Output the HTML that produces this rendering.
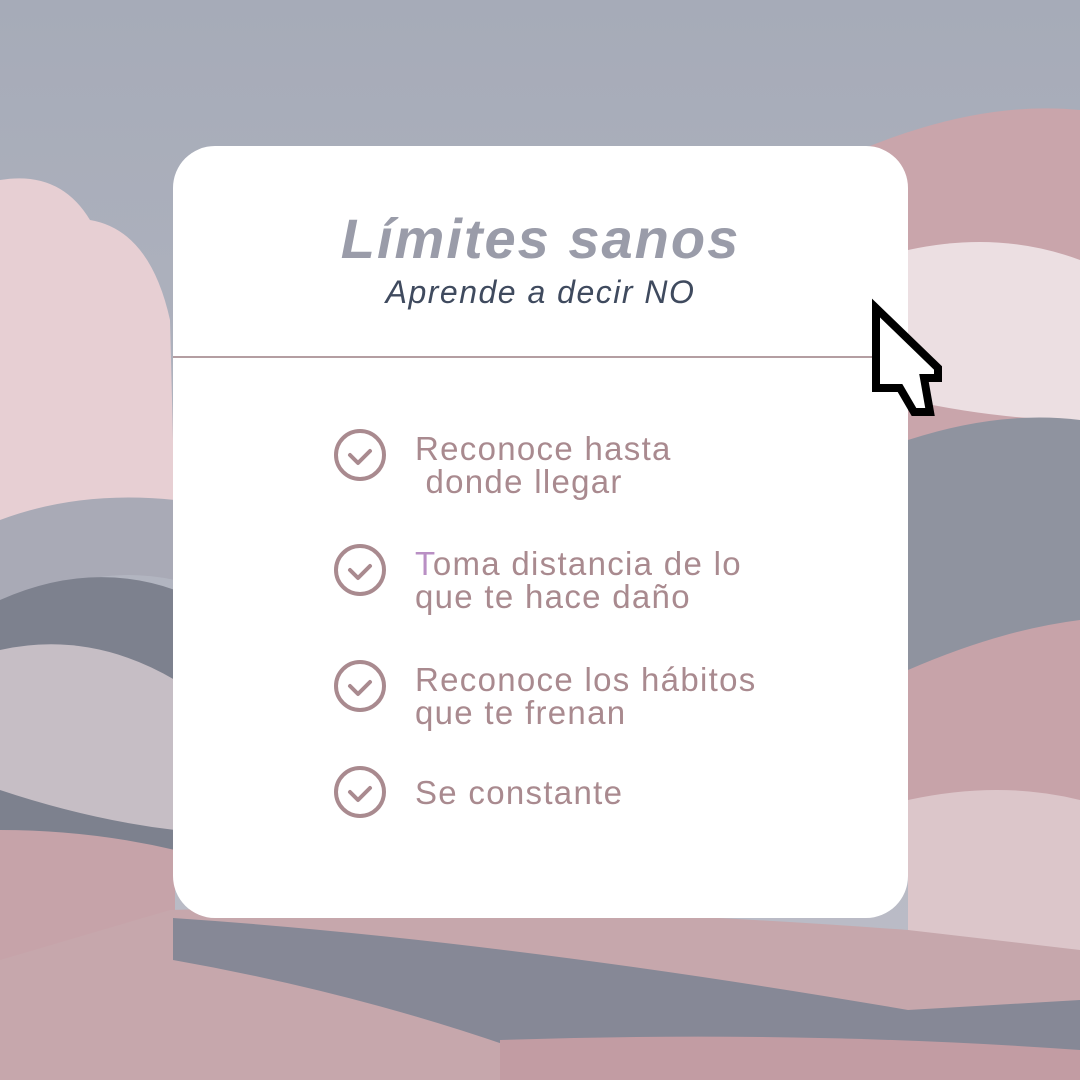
<!DOCTYPE html>
<html><head><meta charset="utf-8"><style>
body{margin:0;width:1080px;height:1080px;overflow:hidden;position:relative;font-family:"Liberation Sans",sans-serif}
.bg{position:absolute;inset:0}
.card{position:absolute;left:173px;top:146px;width:735px;height:772px;background:#fff;border-radius:42px}
.t1{position:absolute;left:173px;width:735px;top:206px;text-align:center;font-size:56px;font-weight:bold;font-style:italic;color:#9a9ca9;letter-spacing:2px}
.t2{position:absolute;left:173px;width:735px;top:274px;text-align:center;font-size:32px;font-style:italic;color:#3f4a5e;letter-spacing:1.5px}
.hr{position:absolute;left:173px;top:356px;width:700px;height:2px;background:#b49ea2}
.it{position:absolute;left:415px;font-size:33px;line-height:33px;color:#a98a8f;letter-spacing:1.3px;white-space:nowrap}
</style></head><body>
<svg class="bg" width="1080" height="1080" viewBox="0 0 1080 1080">
<defs><linearGradient id="sky" x1="0" y1="0" x2="0" y2="1"><stop offset="0" stop-color="#a6abb8"/><stop offset="1" stop-color="#bdbec8"/></linearGradient></defs>
<rect width="1080" height="1080" fill="url(#sky)"/>
<path d="M0 180 Q60 170 90 220 Q150 230 170 320 L175 520 L0 520Z" fill="#e7cfd3"/>
<path d="M860 150 Q980 100 1080 110 L1080 430 Q980 420 908 440Z" fill="#c9a5ab"/>
<path d="M908 250 Q1000 230 1080 260 L1080 420 Q1000 420 908 400Z" fill="#ecdfe2"/>
<path d="M908 440 Q1000 410 1080 420 L1080 640 Q980 660 908 670Z" fill="#8f939f"/>
<path d="M908 670 Q1000 630 1080 620 L1080 1080 L908 1080Z" fill="#c7a3a9"/>
<path d="M908 800 Q1000 780 1080 800 L1080 960 Q1000 950 908 940Z" fill="#dcc6ca"/>
<path d="M0 520 Q80 490 175 500 L175 580 Q80 560 0 620Z" fill="#a9aab6"/>
<path d="M0 600 Q90 560 175 590 L175 860 L0 860Z" fill="#7d818e"/>
<path d="M0 650 Q90 630 175 680 L175 830 Q90 820 0 790Z" fill="#c6bec5"/>
<path d="M0 830 Q90 830 175 850 L175 1080 L0 1080Z" fill="#c6a3a9"/>
<path d="M170 910 Q500 900 908 930 L1080 950 L1080 1080 L0 1080 L0 960Z" fill="#c6a7ac"/>
<path d="M173 918 Q500 940 908 1010 L1080 1000 L1080 1080 L600 1080 Q400 1000 173 960Z" fill="#868896"/>
<path d="M500 1040 Q800 1030 1080 1050 L1080 1080 L500 1080Z" fill="#c29ca3"/>
</svg>
<div class="card"></div>
<div class="t1">Límites sanos</div>
<div class="t2">Aprende a decir NO</div>
<div class="hr"></div>
<svg style="position:absolute;left:0;top:0" width="1080" height="1080">
<g fill="none" stroke="#a98a8f" stroke-width="4" stroke-linecap="round" stroke-linejoin="round">
<circle cx="360" cy="455" r="24"/><path d="M350 455l8 8 12-12"/>
<circle cx="360" cy="570" r="24"/><path d="M350 570l8 8 12-12"/>
<circle cx="360" cy="686" r="24"/><path d="M350 686l8 8 12-12"/>
<circle cx="360" cy="792" r="24"/><path d="M350 792l8 8 12-12"/>
</g>
<path d="M876 308 L876 388 L900 388 L914 412 L930 412 L924 378 L938 378 L938 368 Z" fill="#fff" stroke="#000" stroke-width="8" stroke-linejoin="miter"/>
</svg>
<div class="it" style="top:432px">Reconoce hasta<br>&nbsp;donde llegar</div>
<div class="it" style="top:547px"><span style="color:#b98fc4">T</span>oma distancia de lo<br>que te hace daño</div>
<div class="it" style="top:663px">Reconoce los hábitos<br>que te frenan</div>
<div class="it" style="top:776px">Se constante</div>
</body></html>
